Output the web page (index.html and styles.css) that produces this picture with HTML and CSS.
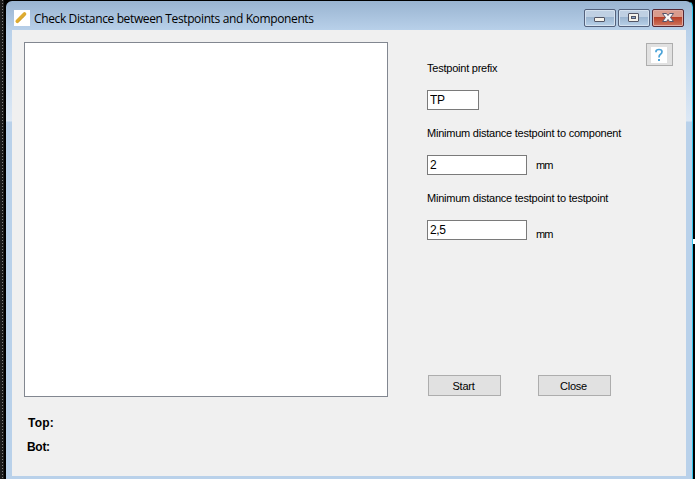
FILE: index.html
```html
<!DOCTYPE html>
<html lang="en">
<head>
<meta charset="utf-8">
<title>Check Distance between Testpoints and Komponents</title>
<link rel="stylesheet" href="styles.css">
</head>
<body>
<div class="window">
  <header class="titlebar">
    <svg class="app-icon" width="16" height="16" viewBox="0 0 16 16"><path fill="#fff" d="M0 0h16v16H0z"/><path d="M3.3 11.2 10.5 4" stroke="#dfac2f" stroke-width="3.7" stroke-linecap="round"/><path d="m4 12.3 7.3-7.2" stroke="#b98d3c" stroke-width=".8" stroke-dasharray="1 1"/></svg>
    <h1 class="title">Check Distance between Testpoints and Komponents</h1>
    <div class="controls">
      <button class="control" aria-label="Minimize"><svg width="30" height="16" viewBox="0 0 30 16"><rect x="9.5" y="7.5" width="10" height="4" rx=".5" fill="#f5f3ec" stroke="#535666"/></svg></button>
      <button class="control" aria-label="Maximize"><svg width="30" height="16" viewBox="0 0 30 16"><rect x="9.5" y="3.5" width="10" height="8" rx=".5" fill="#f5f3ec" stroke="#535666"/><rect x="12.5" y="6.5" width="4" height="2" fill="#8aa9cf" stroke="#535666"/></svg></button>
      <button class="control control-close" aria-label="Close window"><svg width="30" height="16" viewBox="0 0 30 16"><path d="M9.5 3.5h4l1.5 2 1.5-2h4l-3 4 3 4h-4l-1.5-2-1.5 2h-4l3-4z" fill="#f8f6f5" stroke="#56546a"/></svg></button>
    </div>
  </header>
  <main class="client">
    <section class="results">
      <div class="list"></div>
      <p class="total total-top">Top:</p>
      <p class="total total-bottom">Bot:</p>
    </section>
    <form class="settings">
      <label class="label" for="prefix"><span>Testpoint prefix</span></label>
      <div class="field"><input class="input input-small" id="prefix" value="TP"></div>
      <label class="label" for="component"><span>Minimum distance testpoint to component</span></label>
      <div class="field"><input class="input" id="component" value="2"><span class="unit">mm</span></div>
      <label class="label" for="testpoint"><span>Minimum distance testpoint to testpoint</span></label>
      <div class="field"><input class="input" id="testpoint" value="2,5"><span class="unit unit-low">mm</span></div>
      <div class="actions"><button class="button" type="button">Start</button><button class="button" type="button">Close</button></div>
    </form>
    <button class="help" aria-label="Help"><svg width="16" height="16" viewBox="0 0 16 16"><path fill="#fff" d="M0 0h16v16H0z"/><path d="M5 5.3V4.5Q5 2.5 8 2.5t3 2.3q0 1.4-1.5 2.5Q8 8.3 8 10.5" fill="none" stroke="#4ba3d8" stroke-width="1.7"/><path d="M7 12h2v2H7z" fill="#4ba3d8"/></svg></button>
  </main>
</div>
<div class="backdrop"><i class="handle"></i></div>
</body>
</html>
```
FILE: styles.css
```css
* { box-sizing: border-box; }
html { background: #111; }
body {
  margin: 0;
  width: 695px;
  height: 479px;
  overflow: hidden;
  display: flex;
  padding-left: 5px;
  background:
    linear-gradient(#808080 0 1px, transparent 1px) 2px 0 / 1px 3px repeat-y,
    linear-gradient(90deg, #1b1b1b 4px, #000 4px);
  font: 11px/13px "Liberation Sans", sans-serif;
  color: #000;
}
button, input { font: inherit; color: inherit; margin: 0; border-radius: 0; }
svg { display: block; }
.window {
  width: 688px;
  height: 479px;
  border: solid #000;
  border-width: 1px 1px 0 1px;
  border-right-color: #30c3e9;
  border-radius: 7px 7px 0 0;
  padding: 0 6px;
  background: linear-gradient(#99b4d1 0, #b9d1ea 30px, #dce8f5 120px, #b9d1ea 121px);
}
.titlebar {
  height: 29px;
  display: flex;
  align-items: flex-start;
  padding: 9px 2px 0;
}
.app-icon { flex: none; }
.title {
  flex: 1;
  margin: 1px 0 0 4px;
  font: 12px/16px "Open Sans", sans-serif;
  letter-spacing: -0.37px;
  white-space: nowrap;
}
.controls { display: flex; gap: 2px; }
.control {
  width: 32px;
  height: 18px;
  padding: 0;
  border: 1px solid #53617c;
  border-radius: 2px;
  box-shadow: inset 0 0 0 1px #d5e2f0;
  background: linear-gradient(#bfd0e3 0 45%, #9bb5d0 46%, #b9d1e9);
}
.control:not(.control-close) svg { margin-top: 0; }
.control { margin-top: -1px; }
.control-close {
  border-color: #552733;
  box-shadow: inset 0 0 0 1px #dfaaa2;
  background: linear-gradient(#d99b8c 0 45%, #b83f27 46%, #ce765f);
}
.client {
  height: 446px;
  display: grid;
  grid-template-columns: 364px 219px 27px;
  padding: 12px 12px 0;
  justify-content: start;
  background: #f0f0f0;
}
.list { height: 355px; border: 1px solid #828790; background: #fff; }
.total { margin: 11px 0 0 4px; font-size: 12px; font-weight: bold; letter-spacing: -0.3px; }
.total-top { margin-top: 20px; letter-spacing: 0.2px; }
.total-bottom { margin-left: 3px; }
.settings { padding: 20px 0 0 39px; }
.label { display: block; height: 28px; white-space: nowrap; letter-spacing: -0.23px; }
.field { display: flex; height: 37px; }
.input {
  width: 100px;
  height: 20px;
  padding: 0 2px;
  border: 1px solid #7a7a7a;
  background: #fff;
  font-size: 12px;
  letter-spacing: -0.4px;
}
.input-small { width: 52px; }
.unit { margin: 4px 0 0 9px; letter-spacing: -1px; }
.unit-low { margin-top: 8px; }
.actions { display: flex; gap: 37px; margin: 118px 0 0 1px; }
.button {
  width: 73px;
  height: 21px;
  flex: none;
  padding: 1px 2px 0 0;
  border: 1px solid #adadad;
  background: #e1e1e1;
  letter-spacing: -0.25px;
}
.help {
  width: 27px;
  height: 23px;
  margin: 1px 0 0 39px;
  padding: 2px 0 0 4px;
  border: 1px solid #adadad;
  background: #e1e1e1;
}
.help svg { margin-top: -2px; }
.backdrop { width: 2px; background: #000; padding-top: 239px; }
.handle { display: block; width: 2px; height: 5px; background: #fff; }
```
